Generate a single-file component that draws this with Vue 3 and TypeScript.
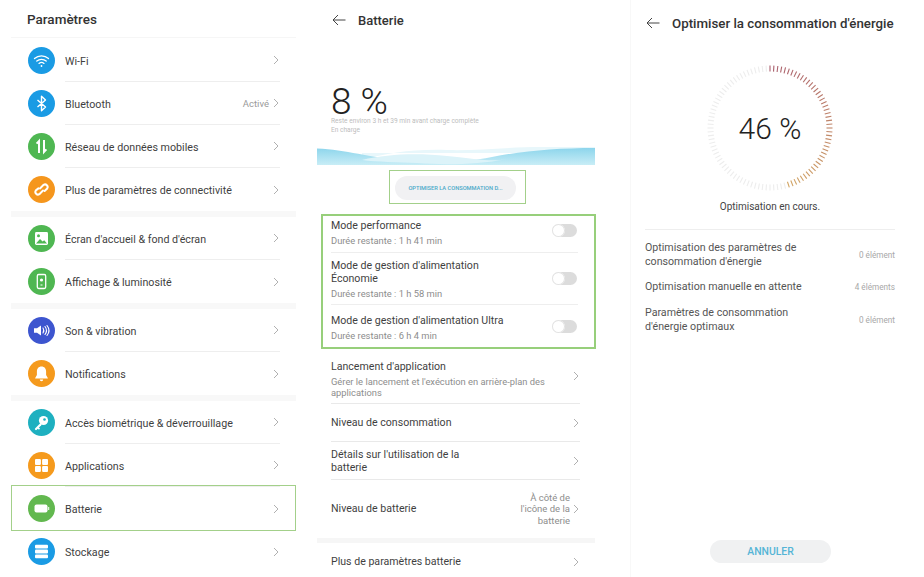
<template>
  <div class="page">
    <section class="settings">
      <h1 class="settings-title">Paramètres</h1>
      <div v-for="(group, g) in groups" :key="g" class="group">
        <div v-for="row in group" :key="row.label" class="setting" :class="{ selected: row.icon === 'battery' }">
          <span class="icon" :style="{ background: row.color }">
            <svg viewBox="0 0 27 27" width="27" height="27">
              <g v-if="row.icon === 'wifi'" fill="none" stroke="#fff" stroke-width="1.3" stroke-linecap="round">
                <path d="M6.5 11.5c4-3.6 10-3.6 14 0" />
                <path d="M8.8 14c2.7-2.3 6.7-2.3 9.4 0" />
                <path d="M11 16.4c1.4-1.1 3.6-1.1 5 0" />
                <circle cx="13.5" cy="19" r=".9" fill="#fff" stroke="none" />
              </g>
              <path v-else-if="row.icon === 'bluetooth'" d="M9.5 10l8 7-4 3.8V6.2l4 3.8-8 7" fill="none" stroke="#fff" stroke-width="1.4" stroke-linejoin="round" />
              <g v-else-if="row.icon === 'data'" fill="none" stroke="#fff" stroke-width="2">
                <path d="M11 20V8l-2.4 2.6" />
                <path d="M16 7v12l2.4-2.6" />
              </g>
              <g v-else-if="row.icon === 'link'" fill="none" stroke="#fff" stroke-width="2" stroke-linecap="round">
                <path d="M12 12.5l3.6-3.6a2.6 2.6 0 0 1 3.6 3.6L16.6 15" />
                <path d="M15 14.5l-3.6 3.6a2.6 2.6 0 0 1-3.6-3.6l2.6-2.1" />
              </g>
              <g v-else-if="row.icon === 'image'">
                <rect x="7" y="7" width="13" height="13" rx="1.4" fill="#fff" />
                <circle cx="10.5" cy="10.8" r="1.5" fill="#4fb752" />
                <path d="M8 18.5l4-4.5 2.6 2.6 1.6-1.4 2.8 3.3z" fill="#4fb752" />
              </g>
              <g v-else-if="row.icon === 'display'">
                <rect x="9.3" y="6.5" width="8.4" height="14" rx="1.4" fill="none" stroke="#fff" stroke-width="1.3" />
                <circle cx="13.5" cy="12" r="1.6" fill="#fff" />
                <path d="M12.5 17h2" stroke="#fff" />
              </g>
              <g v-else-if="row.icon === 'sound'">
                <path d="M6 11.3h3l4-2.8v10l-4-2.8H6z" fill="#fff" />
                <path d="M15 11c1 1.5 1 3.5 0 5M17 9.5c1.8 2.4 1.8 5.6 0 8M19 8.5c2.4 3 2.4 7 0 10" fill="none" stroke="#fff" stroke-width="1.1" stroke-linecap="round" />
              </g>
              <g v-else-if="row.icon === 'bell'" fill="#fff">
                <path d="M13.5 6.5c-3 0-4.6 2.3-4.6 5V15L7.2 18v.6h12.6V18l-1.7-3v-3.500c0-2.700-1.600-5-4.600-5z" />
                <path d="M11.8 19.6h3.400a1.700 1.700 0 0 1-3.400 0z" />
              </g>
              <g v-else-if="row.icon === 'key'">
                <path d="M12.5 15.5L8 20" fill="none" stroke="#fff" stroke-width="2.2" stroke-linecap="round" />
                <path d="M9.8 18.6l1.700 1.500" stroke="#fff" stroke-width="1.6" />
                <circle cx="15.5" cy="11.5" r="4.6" fill="#fff" />
                <circle cx="16.5" cy="10.5" r="1.3" fill="#1eb0c0" />
              </g>
              <g v-else-if="row.icon === 'apps'" fill="#fff">
                <rect x="7" y="7" width="5.9" height="5.9" rx="1" />
                <rect x="14.1" y="7" width="5.9" height="5.9" rx="1" />
                <rect x="7" y="14.1" width="5.9" height="5.9" rx="1" />
                <rect x="14.1" y="14.1" width="5.9" height="5.9" rx="1" />
              </g>
              <g v-else-if="row.icon === 'battery'" fill="#fff">
                <rect x="6.5" y="9.5" width="13" height="8" rx="2" />
                <rect x="20.2" y="12" width="1" height="3" />
              </g>
              <g v-else fill="#fff">
                <rect x="7" y="6.8" width="13" height="3.8" rx="1" />
                <rect x="7" y="11.6" width="13" height="3.8" rx="1" />
                <rect x="7" y="16.4" width="13" height="3.8" rx="1" />
              </g>
            </svg>
          </span>
          <div class="setting-body">
            <span class="setting-label">{{ row.label }}</span>
            <span v-if="row.value" class="setting-value">{{ row.value }}</span>
            <svg class="chevron chevron-setting" viewBox="0 0 6 10" width="6" height="10"><path d="M1 1l4 4-4 4" /></svg>
          </div>
        </div>
      </div>
    </section>

    <section class="battery">
      <header class="bar">
        <svg class="back" viewBox="0 0 14 12" width="14" height="12"><path d="M13.5 6H1M6 1L1 6l5 5" /></svg>
        <h2 class="bar-title">Batterie</h2>
      </header>
      <div class="level">8 %</div>
      <p class="level-note">Reste environ 3 h et 39 min avant charge complète</p>
      <p class="level-note">En charge</p>
      <svg class="wave" viewBox="0 0 278 18" width="278" height="18" preserveAspectRatio="none">
        <defs>
          <linearGradient id="waveBlue" x1="0" y1="0" x2="0" y2="1">
            <stop offset="0" stop-color="#8dd5ec" />
            <stop offset="1" stop-color="#c8edf6" />
          </linearGradient>
        </defs>
        <path d="M45 13C70 6 95 2 130 3c30 1 60-3 95-3h53v6H45z" fill="#e8f7fb" />
        <path d="M0 1.5C30 3 50 10 90 14c30 3 60 1 85-4 30-6 65-9 103-9v17H0z" fill="url(#waveBlue)" />
        <path d="M45 13c25-6 55-7 85-4 30 3 45 6 60 3-30 6-65 6-90 4-20-1-40-1-55-3z" fill="#dcf3f9" />
      </svg>
      <div class="optimise-wrap">
        <div class="optimise-pill">OPTIMISER LA CONSOMMATION D...</div>
      </div>
      <div class="modes">
        <div v-for="mode in modes" :key="mode.time" class="mode">
          <div class="mode-text">
            <div class="line-title">{{ mode.title }}</div>
            <div class="line-sub">{{ mode.time }}</div>
          </div>
          <span class="toggle"><i class="knob"></i></span>
        </div>
      </div>
      <div class="links">
        <div class="link link-start">
          <div class="link-text link-wide">
            <div class="line-title">Lancement d'application</div>
            <div class="line-sub">Gérer le lancement et l'exécution en arrière-plan des applications</div>
          </div>
          <svg class="chevron" viewBox="0 0 6 10" width="6" height="10"><path d="M1 1l4 4-4 4" /></svg>
        </div>
        <div class="link link-consumption">
          <div class="link-text line-title">Niveau de consommation</div>
          <svg class="chevron" viewBox="0 0 6 10" width="6" height="10"><path d="M1 1l4 4-4 4" /></svg>
        </div>
        <div class="link link-consumption">
          <div class="link-text line-title link-narrow">Détails sur l'utilisation de la batterie</div>
          <svg class="chevron" viewBox="0 0 6 10" width="6" height="10"><path d="M1 1l4 4-4 4" /></svg>
        </div>
        <div class="link link-level">
          <div class="link-text line-title">Niveau de batterie</div>
          <div class="link-side">À côté de l'icône de la batterie</div>
          <svg class="chevron" viewBox="0 0 6 10" width="6" height="10"><path d="M1 1l4 4-4 4" /></svg>
        </div>
      </div>
      <div class="band"></div>
      <div class="link link-more">
        <div class="link-text line-title">Plus de paramètres batterie</div>
        <svg class="chevron" viewBox="0 0 6 10" width="6" height="10"><path d="M1 1l4 4-4 4" /></svg>
      </div>
    </section>

    <section class="optimise">
      <header class="bar bar-optimise">
        <svg class="back" viewBox="0 0 14 12" width="14" height="12"><path d="M13.5 6H1M6 1L1 6l5 5" /></svg>
        <h2 class="bar-title bar-title-long">Optimiser la consommation d'énergie</h2>
      </header>
      <div class="ring">
        <svg viewBox="0 0 126 126" width="126" height="126">
          <line
            v-for="tick in ticks"
            :key="tick.id"
            :x1="tick.x1"
            :y1="tick.y1"
            :x2="tick.x2"
            :y2="tick.y2"
            :stroke="tick.color"
            stroke-width="1.1"
          />
        </svg>
        <span class="ring-value">46 %</span>
      </div>
      <p class="ring-note">Optimisation en cours.</p>
      <div class="results">
        <div v-for="item in results" :key="item.label" class="result">
          <span class="result-label">{{ item.label }}</span>
          <span class="result-count">{{ item.count }}</span>
        </div>
      </div>
      <div class="cancel-wrap">
        <div class="cancel">ANNULER</div>
      </div>
    </section>
  </div>
</template>

<script setup lang="ts">
interface SettingRow {
  label: string
  icon: string
  color: string
  value?: string
}

const groups: SettingRow[][] = [
  [
    { label: 'Wi-Fi', icon: 'wifi', color: '#1a9be4' },
    { label: 'Bluetooth', icon: 'bluetooth', color: '#1a9be4', value: 'Activé' },
    { label: 'Réseau de données mobiles', icon: 'data', color: '#4fb752' },
    { label: 'Plus de paramètres de connectivité', icon: 'link', color: '#f5961d' }
  ],
  [
    { label: "Écran d'accueil & fond d'écran", icon: 'image', color: '#4fb752' },
    { label: 'Affichage & luminosité', icon: 'display', color: '#4fb752' }
  ],
  [
    { label: 'Son & vibration', icon: 'sound', color: '#3d55cf' },
    { label: 'Notifications', icon: 'bell', color: '#f59a1d' }
  ],
  [
    { label: 'Accès biométrique & déverrouillage', icon: 'key', color: '#1eb0c0' },
    { label: 'Applications', icon: 'apps', color: '#f59a1d' },
    { label: 'Batterie', icon: 'battery', color: '#62b84f' },
    { label: 'Stockage', icon: 'storage', color: '#1a9be4' }
  ]
]

const modes = [
  { title: 'Mode performance', time: 'Durée restante : 1 h 41 min' },
  { title: "Mode de gestion d'alimentation Économie", time: 'Durée restante : 1 h 58 min' },
  { title: "Mode de gestion d'alimentation Ultra", time: 'Durée restante : 6 h 4 min' }
]

const results = [
  { label: "Optimisation des paramètres de consommation d'énergie", count: '0 élément' },
  { label: 'Optimisation manuelle en attente', count: '4 éléments' },
  { label: "Paramètres de consommation d'énergie optimaux", count: '0 élément' }
]

// 100 graduations, 46 coloured ones going clockwise from the top
const ticks = Array.from({ length: 100 }, (_, id) => {
  const angle = (id / 100) * Math.PI * 2
  const sin = Math.sin(angle)
  const cos = Math.cos(angle)
  let color = '#ededed'
  if (id < 46) {
    const t = id / 45
    const r = Math.round(170 + 40 * t)
    const g = Math.round(95 + 70 * t)
    const b = Math.round(110 - 10 * t)
    color = `rgb(${r}, ${g}, ${b})`
  }
  return {
    id,
    color,
    x1: 63 + 56.5 * sin,
    y1: 63 - 56.5 * cos,
    x2: 63 + 62.5 * sin,
    y2: 63 - 62.5 * cos
  }
})
</script>

<style>
html,
body {
  margin: 0;
  background: #fff;
}
</style>

<style scoped>
.page {
  display: flex;
  width: 924px;
  height: 577px;
  overflow: hidden;
  background: #fff;
  font-family: Roboto, "Liberation Sans", sans-serif;
  color: #3f3f3f;
}

.settings {
  flex: none;
  width: 285px;
  margin-left: 11px;
}

.settings-title {
  height: 38px;
  margin: 0 0 1px;
  padding-left: 16px;
  border-bottom: 1px solid #f6f6f6;
  box-sizing: border-box;
  font-size: 13.5px;
  font-weight: 500;
  line-height: 39px;
  color: #333;
}

.group {
  border-bottom: 6px solid #f8f8f8;
}

.group:last-child {
  border-bottom: 0;
}

.setting {
  position: relative;
  display: flex;
  align-items: center;
  height: 43px;
  padding-left: 17px;
  box-sizing: border-box;
}

.selected::after {
  content: "";
  position: absolute;
  inset: -2px 0 -1px;
  border: 1.5px solid #a3d08a;
}

.icon {
  flex: none;
  display: block;
  width: 27px;
  height: 27px;
  margin-right: 10px;
  border-radius: 50%;
}

.icon svg {
  display: block;
}

.setting-body {
  flex: 1;
  display: flex;
  align-items: center;
  height: 100%;
  margin-right: 16px;
  padding-right: 1px;
  border-bottom: 1px solid #eee;
  box-sizing: border-box;
}

.setting:last-child .setting-body,
.selected .setting-body {
  border-bottom: 0;
}

.setting-label {
  flex: 1;
  padding-top: 2px;
  font-size: 10.7px;
}

.setting-value {
  margin-right: 4px;
  font-size: 9.5px;
  color: #9a9a9a;
}

.chevron {
  flex: none;
  margin-left: auto;
  margin-right: 1px;
  fill: none;
  stroke: #b0b0b0;
  stroke-width: 1;
}

.chevron-setting {
  margin-left: 0;
  margin-right: 0;
}

.battery {
  flex: none;
  width: 278px;
  margin-left: 21px;
}

.bar {
  display: flex;
  align-items: center;
  gap: 12px;
  height: 40px;
  padding-left: 15px;
}

.back {
  flex: none;
  fill: none;
  stroke: #444;
  stroke-width: 1;
}

.bar-title {
  margin: 0;
  font-size: 13px;
  font-weight: 500;
  color: #333;
}

.level {
  margin: 47px 0 0 14px;
  font-size: 37px;
  font-weight: 300;
  line-height: 30px;
  color: #222;
}

.level-note {
  margin: 0 0 0 14px;
  font-size: 6.6px;
  line-height: 9px;
  color: #bdbdbd;
}

.wave {
  display: block;
  margin-top: 12px;
}

.optimise-wrap {
  width: 137px;
  height: 34px;
  margin: 5px 0 0 72px;
  padding: 5px 9px 5px 5px;
  border: 1px solid #a3d08a;
  box-sizing: border-box;
}

.optimise-pill {
  height: 24px;
  border-radius: 12px;
  background: #f1f1f3;
  font-size: 5.7px;
  font-weight: 500;
  line-height: 24px;
  text-align: center;
  color: #4aa9c9;
}

.modes {
  width: 275px;
  height: 135px;
  margin: 10px 0 0 4px;
  padding: 0 16px 0 8px;
  border: 2px solid #97cf7b;
  box-sizing: border-box;
}

.mode {
  display: flex;
  align-items: center;
  justify-content: space-between;
  height: 37px;
  padding-bottom: 2px;
  border-bottom: 1px solid #eee;
  box-sizing: border-box;
}

.mode:nth-child(2) {
  height: 52px;
  padding: 2px 0 0;
}

.mode:last-child {
  height: 42px;
  padding: 3px 0 0;
  border-bottom: 0;
}

.mode-text {
  width: 180px;
}

.line-title {
  font-size: 10.6px;
  line-height: 12.5px;
  color: #3f3f3f;
}

.line-sub {
  margin-top: 2.5px;
  font-size: 9.35px;
  line-height: 11px;
  color: #8d8d8d;
}

.toggle {
  display: block;
  width: 25px;
  height: 13px;
  margin: 0 1px 5px 0;
  border-radius: 7px;
  background: #dcdcdc;
}

.mode:nth-child(2) .toggle {
  margin-bottom: 2px;
}

.mode:last-child .toggle {
  margin-bottom: 3px;
}

.knob {
  display: block;
  width: 13px;
  height: 13px;
  border-radius: 50%;
  background: #fff;
  box-shadow: inset 0 0 0 1px #e2e2e2;
}

.links {
  margin-left: 14px;
  width: 249px;
}

.link {
  display: flex;
  align-items: center;
  border-bottom: 1px solid #e9e9e9;
  box-sizing: border-box;
}

.link-start {
  height: 55px;
}

.link-consumption {
  height: 38px;
}

.link-consumption .link-text {
  padding-top: 2px;
}

.link-level {
  height: 58px;
  border-bottom: 0;
}

.link-more {
  height: 38px;
  margin-left: 14px;
  width: 249px;
  border-bottom: 0;
}

.link-text {
  flex: 1;
}

.link-wide {
  padding-top: 7px;
}

.link-wide .line-sub {
  width: 228px;
}

.link-narrow {
  max-width: 150px;
  margin-right: auto;
}

.link-side {
  width: 54px;
  margin-right: 3px;
  font-size: 9.5px;
  line-height: 11.5px;
  text-align: right;
  color: #8d8d8d;
}

.band {
  height: 5px;
  background: #f6f6f6;
}

.optimise {
  flex: none;
  display: flex;
  flex-direction: column;
  width: 294px;
  margin-left: 35px;
  border-left: 1px solid #f8f8f8;
  box-sizing: border-box;
}

.bar-optimise {
  height: 46px;
}

.bar-title-long {
  font-size: 13.3px;
}

.ring {
  position: relative;
  width: 126px;
  height: 126px;
  margin: 19px 0 0 76px;
}

.ring svg {
  display: block;
}

.ring-value {
  position: absolute;
  inset: 0;
  display: flex;
  align-items: center;
  justify-content: center;
  font-size: 30px;
  font-weight: 300;
  color: #222;
}

.ring-note {
  width: 126px;
  margin: 10px 0 0 76px;
  font-size: 10px;
  line-height: 12px;
  text-align: center;
  white-space: nowrap;
  color: #444;
}

.results {
  margin: 16px 0 0 14px;
  width: 250px;
  padding-top: 11px;
  border-top: 1px solid #eee;
}

.result {
  display: flex;
  align-items: center;
  justify-content: space-between;
  min-height: 19px;
  margin-bottom: 8px;
}

.result:nth-child(2) {
  margin-bottom: 10px;
}

.result-label {
  width: 170px;
  font-size: 10.65px;
  line-height: 14px;
  color: #555;
}

.result-count {
  font-size: 8.2px;
  color: #a8a8a8;
}

.cancel-wrap {
  margin: auto 0 14px 79px;
}

.cancel {
  width: 121px;
  height: 23px;
  border-radius: 12px;
  background: #f0f1f2;
  font-size: 10.4px;
  font-weight: 500;
  line-height: 23px;
  text-align: center;
  color: #55b5d6;
}
</style>
